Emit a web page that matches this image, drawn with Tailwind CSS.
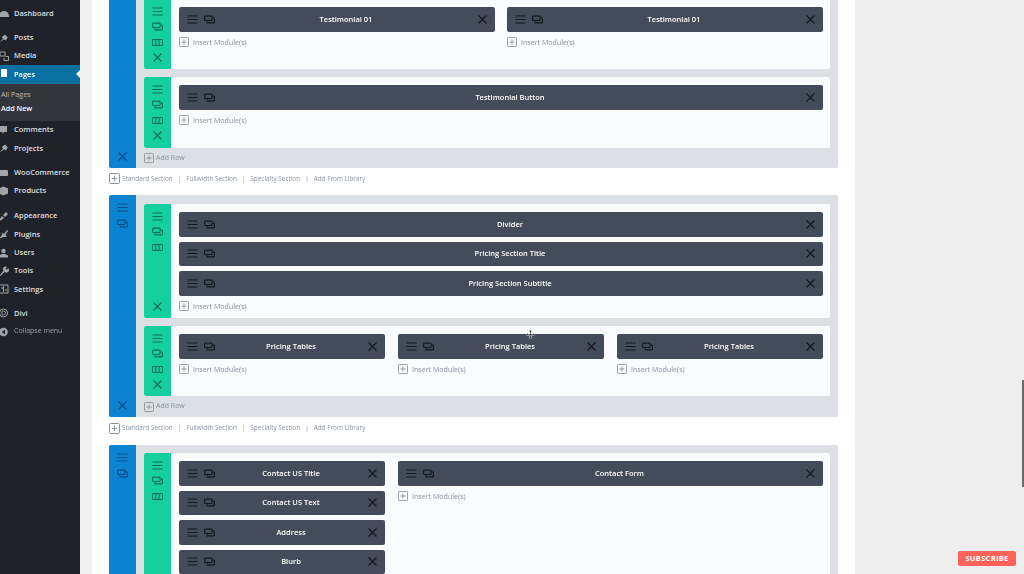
<!DOCTYPE html>
<html>
<head>
<meta charset="UTF-8" />
<title>Divi Builder</title>
<script src="https://cdn.jsdelivr.net/npm/@tailwindcss/browser@4"></script>
</head>
<body class="overflow-hidden">
<svg class="hidden">
  <symbol id="ham" viewBox="0 0 12 12"><path d="M0.500 2.200H11.500M0.500 6H11.500M0.500 9.800H11.500" fill="none" stroke="currentColor" stroke-width="1.300"/></symbol>
  <symbol id="dup" viewBox="0 0 12 12"><path d="M1.500 2.300H8a.8.8 0 0 1 .8.8V6.300a.8.8 0 0 1-.8.8H1.500a.8.8 0 0 1-.8-.8V3.100a.8.8 0 0 1 .8-.8ZM9.800 4.400h.9a.7.7 0 0 1 .7.7v3.900a.7.7 0 0 1-.7.7H3.400V8" fill="none" stroke="currentColor" stroke-width="1.300"/></symbol>
  <symbol id="cols" viewBox="0 0 12 12"><path d="M1.200 2.800H10.800a.6.6 0 0 1 .6.6V8.600a.6.6 0 0 1-.6.6H1.200a.6.6 0 0 1-.6-.6V3.400a.6.6 0 0 1 .6-.6ZM4.200 2.800V9.200M7.800 2.800V9.200" fill="none" stroke="currentColor" stroke-width="1.100"/></symbol>
  <symbol id="x" viewBox="0 0 12 12"><path d="M1.700 1.700L10.300 10.300M10.300 1.700L1.700 10.300" fill="none" stroke="currentColor" stroke-width="1.400"/></symbol>
  <symbol id="plus" viewBox="0 0 11 11"><rect x="0.500" y="0.500" width="10" height="10" rx="1" fill="none" stroke="currentColor"/><path d="M2.700 5.500H8.300M5.500 2.700V8.300" fill="none" stroke="currentColor"/></symbol>
</svg>

<div class="relative flex h-[574px] w-[1024px] overflow-hidden blur-[0.5px] font-['Open_Sans',sans-serif]">

  <!-- wp admin menu -->
  <aside class="w-20 shrink-0 bg-[#1f2329] pt-1 text-[7.500px] font-semibold text-[#dcdee0]">
    <a class="flex h-[18.4px] items-center gap-[5px]"><svg class="ml-[-1px] h-[10px] w-[10px] text-[#a0a5aa]" viewBox="0 0 10 10"><path d="M0 8a5 5 0 0 1 10 0v1H0Z" fill="currentColor"/></svg><span>Dashboard</span></a>
    <a class="mt-[6px] flex h-[18.4px] items-center gap-[5px]"><svg class="ml-[-1px] h-[10px] w-[10px] text-[#a0a5aa]" viewBox="0 0 10 10"><path d="M0 10L4 5.500L2.800 4L6 1.500L8.800 4.500L6.500 7.500L5 6.200Z" fill="currentColor"/></svg><span>Posts</span></a>
    <a class="flex h-[18.4px] items-center gap-[5px]"><svg class="ml-[-1px] h-[10px] w-[10px] text-[#a0a5aa]" viewBox="0 0 10 10"><path d="M1 1H6V5H1ZM6.500 5.500H9.500V9.500H5V7" fill="none" stroke="currentColor"/></svg><span>Media</span></a>
    <a class="relative flex h-[18.4px] items-center gap-[5px] bg-[#0a6fa3] text-white"><svg class="ml-[-1px] h-[10px] w-[10px] text-white" viewBox="0 0 10 10"><path d="M2 0H8V8H2Z" fill="currentColor"/></svg><span>Pages</span><span class="absolute right-0 top-[5px] h-0 w-0 border-y-[4px] border-r-[4px] border-y-transparent border-r-[#f1f1f1]"></span></a>
    <div class="flex h-[37px] flex-col bg-[#32363b] pl-px pt-[4px] text-[7.200px]">
      <a class="flex h-[14px] items-center font-normal text-[#b4b9be]">All Pages</a>
      <a class="flex h-[14px] items-center text-white">Add New</a>
    </div>
    <a class="flex h-[18.4px] items-center gap-[5px]"><svg class="ml-[-1px] h-[10px] w-[10px] text-[#a0a5aa]" viewBox="0 0 10 10"><path d="M1 1H8V7H5L3.500 9.500V7H1Z" fill="currentColor"/></svg><span>Comments</span></a>
    <a class="flex h-[18.4px] items-center gap-[5px]"><svg class="ml-[-1px] h-[10px] w-[10px] text-[#a0a5aa]" viewBox="0 0 10 10"><path d="M0 10L4 5.500L2.800 4L6 1.500L8.800 4.500L6.500 7.500L5 6.200Z" fill="currentColor"/></svg><span>Projects</span></a>
    <a class="mt-[6px] flex h-[18.4px] items-center gap-[5px]"><svg class="ml-[-1px] h-[10px] w-[10px] text-[#a0a5aa]" viewBox="0 0 10 10"><rect x="0" y="2" width="9" height="6" rx="1" fill="currentColor"/></svg><span>WooCommerce</span></a>
    <a class="flex h-[18.4px] items-center gap-[5px]"><svg class="ml-[-1px] h-[10px] w-[10px] text-[#a0a5aa]" viewBox="0 0 10 10"><path d="M4.500 0.500L9 2.500V7.500L4.500 9.500L0 7.500V2.500Z" fill="currentColor"/></svg><span>Products</span></a>
    <a class="mt-[6.500px] flex h-[18.4px] items-center gap-[5px]"><svg class="ml-[-1px] h-[10px] w-[10px] text-[#a0a5aa]" viewBox="0 0 10 10"><path d="M0 9L3 5L5 7L2 9.500ZM4 4L7 1L9 3L6 6Z" fill="currentColor"/></svg><span>Appearance</span></a>
    <a class="flex h-[18.4px] items-center gap-[5px]"><svg class="ml-[-1px] h-[10px] w-[10px] text-[#a0a5aa]" viewBox="0 0 10 10"><path d="M0 9.500L3 6L2.500 3.500L5 5L8 1L9 2L6.500 5.500L8 8H4.500Z" fill="currentColor"/></svg><span>Plugins</span></a>
    <a class="flex h-[18.4px] items-center gap-[5px]"><svg class="ml-[-1px] h-[10px] w-[10px] text-[#a0a5aa]" viewBox="0 0 10 10"><circle cx="4.500" cy="3" r="2.200" fill="currentColor"/><path d="M0 9.500V7.500L3 6H6L9 7.500V9.500Z" fill="currentColor"/></svg><span>Users</span></a>
    <a class="flex h-[18.4px] items-center gap-[5px]"><svg class="ml-[-1px] h-[10px] w-[10px] text-[#a0a5aa]" viewBox="0 0 10 10"><path d="M0.500 9.500L4.500 4.500A2.500 2.500 0 0 1 8 1L6.500 2.800L7.500 3.800L9.300 2.300A2.500 2.500 0 0 1 5.700 5.800L1.500 10Z" fill="currentColor"/></svg><span>Tools</span></a>
    <a class="flex h-[18.4px] items-center gap-[5px]"><svg class="ml-[-1px] h-[10px] w-[10px] text-[#a0a5aa]" viewBox="0 0 10 10"><path d="M0.500 1H9V9H0.500ZM4.500 2V8M2 4H4M6 6H8" fill="none" stroke="currentColor"/></svg><span>Settings</span></a>
    <a class="mt-[5.500px] flex h-[18.4px] items-center gap-[5px]"><svg class="ml-[-1px] h-[10px] w-[10px] text-[#a0a5aa]" viewBox="0 0 10 10"><circle cx="4.500" cy="5" r="4" fill="none" stroke="currentColor"/><path d="M3 3H4.500A2 2 0 0 1 4.500 7H3Z" fill="none" stroke="currentColor" stroke-width="0.800"/></svg><span>Divi</span></a>
    <a class="flex h-[18.4px] items-center gap-[5px] text-[7px] font-normal text-[#9ca1a6]"><svg class="ml-[-1px] h-[10px] w-[10px] text-[#a0a5aa]" viewBox="0 0 10 10"><circle cx="4.500" cy="5" r="4.300" fill="currentColor"/><path d="M6 2.500L2.800 5L6 7.500Z" fill="#1f2329"/></svg><span>Collapse menu</span></a>
  </aside>

  <div class="w-3 shrink-0 bg-[#f1f1f1]"></div>

  <!-- builder -->
  <main class="w-[763px] shrink-0 bg-white pl-[17px] pr-[17px]">

    <!-- section 1 -->
    <section class="mt-[-9px] flex overflow-hidden rounded-[2px] bg-[#dce0e4]">
      <div class="flex w-[27px] shrink-0 flex-col items-center justify-end bg-[#0c82d1] pb-[6px] text-[#0a4f85]">
        <svg class="h-[11px] w-[11px]"><use href="#x"/></svg>
      </div>
      <div class="flex-1 px-2 pt-2">
        <div class="flex flex-col gap-2">
          <div class="flex h-[70px] overflow-hidden rounded-[2px] bg-[#fafbfc]">
            <div class="flex w-[27px] shrink-0 flex-col items-center gap-[4.500px] bg-[#15cf9f] pt-[6.500px] text-[#0b7059]">
              <svg class="h-[11px] w-[11px]"><use href="#ham"/></svg>
              <svg class="h-[11px] w-[11px]"><use href="#dup"/></svg>
              <svg class="h-[11px] w-[11px]"><use href="#cols"/></svg>
              <svg class="h-[11px] w-[11px]"><use href="#x"/></svg>
            </div>
            <div class="grid flex-1 grid-cols-2 gap-x-3 pl-2 pr-[7px] pt-2">
              <div>
                <div class="flex h-[24.500px] items-center rounded-[2px] bg-[#444b5a] pl-2 pr-[7px] text-[#14181f]"><svg class="h-[11px] w-[11px]"><use href="#ham"/></svg><svg class="ml-[6px] h-[11px] w-[11px]"><use href="#dup"/></svg><span class="flex-1 text-center text-[7.500px] font-semibold text-white">Testimonial 01</span><svg class="h-[11px] w-[11px]"><use href="#x"/></svg></div>
                <div class="mt-[5px] flex items-center gap-1 text-[7.100px] text-[#8a93a0]"><svg class="h-[10px] w-[10px]"><use href="#plus"/></svg>Insert Module(s)</div>
              </div>
              <div>
                <div class="flex h-[24.500px] items-center rounded-[2px] bg-[#444b5a] pl-2 pr-[7px] text-[#14181f]"><svg class="h-[11px] w-[11px]"><use href="#ham"/></svg><svg class="ml-[6px] h-[11px] w-[11px]"><use href="#dup"/></svg><span class="flex-1 text-center text-[7.500px] font-semibold text-white">Testimonial 01</span><svg class="h-[11px] w-[11px]"><use href="#x"/></svg></div>
                <div class="mt-[5px] flex items-center gap-1 text-[7.100px] text-[#8a93a0]"><svg class="h-[10px] w-[10px]"><use href="#plus"/></svg>Insert Module(s)</div>
              </div>
            </div>
          </div>
          <div class="flex h-[71px] overflow-hidden rounded-[2px] bg-[#fafbfc]">
            <div class="flex w-[27px] shrink-0 flex-col items-center gap-[4.500px] bg-[#15cf9f] pt-[6.500px] text-[#0b7059]">
              <svg class="h-[11px] w-[11px]"><use href="#ham"/></svg>
              <svg class="h-[11px] w-[11px]"><use href="#dup"/></svg>
              <svg class="h-[11px] w-[11px]"><use href="#cols"/></svg>
              <svg class="h-[11px] w-[11px]"><use href="#x"/></svg>
            </div>
            <div class="flex-1 pl-2 pr-[7px] pt-2">
              <div class="flex h-[24.500px] items-center rounded-[2px] bg-[#444b5a] pl-2 pr-[7px] text-[#14181f]"><svg class="h-[11px] w-[11px]"><use href="#ham"/></svg><svg class="ml-[6px] h-[11px] w-[11px]"><use href="#dup"/></svg><span class="flex-1 text-center text-[7.500px] font-semibold text-white">Testimonial Button</span><svg class="h-[11px] w-[11px]"><use href="#x"/></svg></div>
              <div class="mt-[5px] flex items-center gap-1 text-[7.100px] text-[#8a93a0]"><svg class="h-[10px] w-[10px]"><use href="#plus"/></svg>Insert Module(s)</div>
            </div>
          </div>
        </div>
        <div class="flex h-5 items-center gap-[2px] text-[7px] text-[#8a93a0]"><svg class="h-[10px] w-[10px]"><use href="#plus"/></svg>Add Row</div>
      </div>
    </section>
    <div class="flex h-[27px] items-center pb-[9px] pt-[3px] text-[6.400px] text-[#8a93a0]"><svg class="mr-[2px] h-[11px] w-[11px]"><use href="#plus"/></svg><span>Standard Section</span><span class="mx-[5px]">|</span><span>Fullwidth Section</span><span class="mx-[5px]">|</span><span>Specialty Section</span><span class="mx-[5px]">|</span><span>Add From Library</span></div>

    <!-- section 2 -->
    <section class="flex overflow-hidden rounded-[2px] bg-[#dce0e4]">
      <div class="flex w-[27px] shrink-0 flex-col items-center gap-[5px] bg-[#0c82d1] pb-[6px] pt-[7px] text-[#0a4f85]">
        <svg class="h-[11px] w-[11px]"><use href="#ham"/></svg>
        <svg class="h-[11px] w-[11px]"><use href="#dup"/></svg>
        <svg class="mt-auto h-[11px] w-[11px]"><use href="#x"/></svg>
      </div>
      <div class="flex-1 px-2 pt-[9px]">
        <div class="flex flex-col gap-2">
          <div class="flex h-[114px] overflow-hidden rounded-[2px] bg-[#fafbfc]">
            <div class="flex w-[27px] shrink-0 flex-col items-center gap-[4.500px] bg-[#15cf9f] pb-[6px] pt-[6.500px] text-[#0b7059]">
              <svg class="h-[11px] w-[11px]"><use href="#ham"/></svg>
              <svg class="h-[11px] w-[11px]"><use href="#dup"/></svg>
              <svg class="h-[11px] w-[11px]"><use href="#cols"/></svg>
              <svg class="mt-auto h-[11px] w-[11px]"><use href="#x"/></svg>
            </div>
            <div class="flex flex-1 flex-col gap-[5px] pl-2 pr-[7px] pt-2">
              <div class="flex h-[24.500px] items-center rounded-[2px] bg-[#444b5a] pl-2 pr-[7px] text-[#14181f]"><svg class="h-[11px] w-[11px]"><use href="#ham"/></svg><svg class="ml-[6px] h-[11px] w-[11px]"><use href="#dup"/></svg><span class="flex-1 text-center text-[7.500px] font-semibold text-white">Divider</span><svg class="h-[11px] w-[11px]"><use href="#x"/></svg></div>
              <div class="flex h-[24.500px] items-center rounded-[2px] bg-[#444b5a] pl-2 pr-[7px] text-[#14181f]"><svg class="h-[11px] w-[11px]"><use href="#ham"/></svg><svg class="ml-[6px] h-[11px] w-[11px]"><use href="#dup"/></svg><span class="flex-1 text-center text-[7.500px] font-semibold text-white">Pricing Section Title</span><svg class="h-[11px] w-[11px]"><use href="#x"/></svg></div>
              <div class="flex h-[24.500px] items-center rounded-[2px] bg-[#444b5a] pl-2 pr-[7px] text-[#14181f]"><svg class="h-[11px] w-[11px]"><use href="#ham"/></svg><svg class="ml-[6px] h-[11px] w-[11px]"><use href="#dup"/></svg><span class="flex-1 text-center text-[7.500px] font-semibold text-white">Pricing Section Subtitle</span><svg class="h-[11px] w-[11px]"><use href="#x"/></svg></div>
              <div class="flex items-center gap-1 text-[7.100px] text-[#8a93a0]"><svg class="h-[10px] w-[10px]"><use href="#plus"/></svg>Insert Module(s)</div>
            </div>
          </div>
          <div class="flex h-[70px] overflow-hidden rounded-[2px] bg-[#fafbfc]">
            <div class="flex w-[27px] shrink-0 flex-col items-center gap-[4.500px] bg-[#15cf9f] pt-[6.500px] text-[#0b7059]">
              <svg class="h-[11px] w-[11px]"><use href="#ham"/></svg>
              <svg class="h-[11px] w-[11px]"><use href="#dup"/></svg>
              <svg class="h-[11px] w-[11px]"><use href="#cols"/></svg>
              <svg class="h-[11px] w-[11px]"><use href="#x"/></svg>
            </div>
            <div class="grid flex-1 grid-cols-3 gap-x-[13px] pl-2 pr-[7px] pt-2">
              <div>
                <div class="flex h-[24.500px] items-center rounded-[2px] bg-[#444b5a] pl-2 pr-[7px] text-[#14181f]"><svg class="h-[11px] w-[11px]"><use href="#ham"/></svg><svg class="ml-[6px] h-[11px] w-[11px]"><use href="#dup"/></svg><span class="flex-1 text-center text-[7.500px] font-semibold text-white">Pricing Tables</span><svg class="h-[11px] w-[11px]"><use href="#x"/></svg></div>
                <div class="mt-[5px] flex items-center gap-1 text-[7.100px] text-[#8a93a0]"><svg class="h-[10px] w-[10px]"><use href="#plus"/></svg>Insert Module(s)</div>
              </div>
              <div class="relative">
                <div class="flex h-[24.500px] items-center rounded-[2px] bg-[#444b5a] pl-2 pr-[7px] text-[#14181f]"><svg class="h-[11px] w-[11px]"><use href="#ham"/></svg><svg class="ml-[6px] h-[11px] w-[11px]"><use href="#dup"/></svg><span class="flex-1 text-center text-[7.500px] font-semibold text-white">Pricing Tables</span><svg class="h-[11px] w-[11px]"><use href="#x"/></svg></div>
                <div class="mt-[5px] flex items-center gap-1 text-[7.100px] text-[#8a93a0]"><svg class="h-[10px] w-[10px]"><use href="#plus"/></svg>Insert Module(s)</div>
                <!-- move cursor -->
                <svg class="absolute left-[128px] top-[-4px] h-[9px] w-[9px]" viewBox="0 0 9 9"><path d="M4.500 0L6 2H5V4H7V3L9 4.500L7 6V5H5V7H6L4.500 9L3 7H4V5H2V6L0 4.500L2 3V4H4V2H3Z" fill="#111" stroke="#fff" stroke-width="0.500"/></svg>
              </div>
              <div>
                <div class="flex h-[24.500px] items-center rounded-[2px] bg-[#444b5a] pl-2 pr-[7px] text-[#14181f]"><svg class="h-[11px] w-[11px]"><use href="#ham"/></svg><svg class="ml-[6px] h-[11px] w-[11px]"><use href="#dup"/></svg><span class="flex-1 text-center text-[7.500px] font-semibold text-white">Pricing Tables</span><svg class="h-[11px] w-[11px]"><use href="#x"/></svg></div>
                <div class="mt-[5px] flex items-center gap-1 text-[7.100px] text-[#8a93a0]"><svg class="h-[10px] w-[10px]"><use href="#plus"/></svg>Insert Module(s)</div>
              </div>
            </div>
          </div>
        </div>
        <div class="flex h-[21px] items-center gap-[2px] text-[7px] text-[#8a93a0]"><svg class="h-[10px] w-[10px]"><use href="#plus"/></svg>Add Row</div>
      </div>
    </section>
    <div class="flex h-[28px] items-center pb-[9px] pt-[3px] text-[6.400px] text-[#8a93a0]"><svg class="mr-[2px] h-[11px] w-[11px]"><use href="#plus"/></svg><span>Standard Section</span><span class="mx-[5px]">|</span><span>Fullwidth Section</span><span class="mx-[5px]">|</span><span>Specialty Section</span><span class="mx-[5px]">|</span><span>Add From Library</span></div>

    <!-- section 3 -->
    <section class="flex h-[200px] overflow-hidden rounded-[2px] bg-[#dce0e4]">
      <div class="flex w-[27px] shrink-0 flex-col items-center gap-[5px] bg-[#0c82d1] pt-[7px] text-[#0a4f85]">
        <svg class="h-[11px] w-[11px]"><use href="#ham"/></svg>
        <svg class="h-[11px] w-[11px]"><use href="#dup"/></svg>
      </div>
      <div class="flex-1 px-2 pt-2">
        <div class="flex h-[200px] overflow-hidden rounded-[2px] bg-[#fafbfc]">
          <div class="flex w-[27px] shrink-0 flex-col items-center gap-[4.500px] bg-[#15cf9f] pt-[6.500px] text-[#0b7059]">
            <svg class="h-[11px] w-[11px]"><use href="#ham"/></svg>
            <svg class="h-[11px] w-[11px]"><use href="#dup"/></svg>
            <svg class="h-[11px] w-[11px]"><use href="#cols"/></svg>
          </div>
          <div class="grid flex-1 grid-cols-3 gap-x-[13px] pl-2 pr-[7px] pt-2">
            <div class="flex flex-col gap-[5px]">
              <div class="flex h-[24.500px] items-center rounded-[2px] bg-[#444b5a] pl-2 pr-[7px] text-[#14181f]"><svg class="h-[11px] w-[11px]"><use href="#ham"/></svg><svg class="ml-[6px] h-[11px] w-[11px]"><use href="#dup"/></svg><span class="flex-1 text-center text-[7.500px] font-semibold text-white">Contact US Title</span><svg class="h-[11px] w-[11px]"><use href="#x"/></svg></div>
              <div class="flex h-[24.500px] items-center rounded-[2px] bg-[#444b5a] pl-2 pr-[7px] text-[#14181f]"><svg class="h-[11px] w-[11px]"><use href="#ham"/></svg><svg class="ml-[6px] h-[11px] w-[11px]"><use href="#dup"/></svg><span class="flex-1 text-center text-[7.500px] font-semibold text-white">Contact US Text</span><svg class="h-[11px] w-[11px]"><use href="#x"/></svg></div>
              <div class="flex h-[24.500px] items-center rounded-[2px] bg-[#444b5a] pl-2 pr-[7px] text-[#14181f]"><svg class="h-[11px] w-[11px]"><use href="#ham"/></svg><svg class="ml-[6px] h-[11px] w-[11px]"><use href="#dup"/></svg><span class="flex-1 text-center text-[7.500px] font-semibold text-white">Address</span><svg class="h-[11px] w-[11px]"><use href="#x"/></svg></div>
              <div class="flex h-[24.500px] items-center rounded-[2px] bg-[#444b5a] pl-2 pr-[7px] text-[#14181f]"><svg class="h-[11px] w-[11px]"><use href="#ham"/></svg><svg class="ml-[6px] h-[11px] w-[11px]"><use href="#dup"/></svg><span class="flex-1 text-center text-[7.500px] font-semibold text-white">Blurb</span><svg class="h-[11px] w-[11px]"><use href="#x"/></svg></div>
            </div>
            <div class="col-span-2">
              <div class="flex h-[24.500px] items-center rounded-[2px] bg-[#444b5a] pl-2 pr-[7px] text-[#14181f]"><svg class="h-[11px] w-[11px]"><use href="#ham"/></svg><svg class="ml-[6px] h-[11px] w-[11px]"><use href="#dup"/></svg><span class="flex-1 text-center text-[7.500px] font-semibold text-white">Contact Form</span><svg class="h-[11px] w-[11px]"><use href="#x"/></svg></div>
              <div class="mt-[5px] flex items-center gap-1 text-[7.100px] text-[#8a93a0]"><svg class="h-[10px] w-[10px]"><use href="#plus"/></svg>Insert Module(s)</div>
            </div>
          </div>
        </div>
      </div>
    </section>
  </main>

  <div class="flex-1 bg-[#eeeeee]"></div>

  <!-- overlays -->
  <div class="absolute right-0 top-[380px] h-[107px] w-[2px] bg-[#6b6b6b]"></div>
  <div class="absolute left-[958px] top-[551px] flex h-[15px] w-[58px] items-center justify-center rounded-[2px] bg-[#ff6259] text-[7.500px] font-bold tracking-[0.3px] text-white">SUBSCRIBE</div>
</div>
</body>
</html>
